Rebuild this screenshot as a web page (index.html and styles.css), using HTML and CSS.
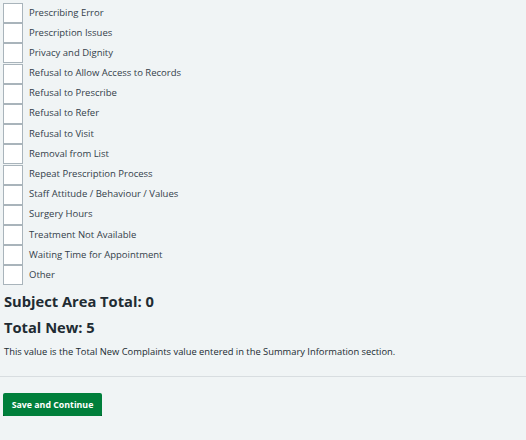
FILE: index.html
```html
<!DOCTYPE html>
<html lang="en">
<head>
<meta charset="utf-8">
<title>Subject Area</title>
<link rel="stylesheet" href="styles.css">
</head>
<body>
<main class="page">
  <div class="checkboxes">
    <label class="row"><span class="box"></span><span class="label">Prescribing Error</span></label>
    <label class="row"><span class="box"></span><span class="label">Prescription Issues</span></label>
    <label class="row"><span class="box"></span><span class="label">Privacy and Dignity</span></label>
    <label class="row"><span class="box"></span><span class="label">Refusal to Allow Access to Records</span></label>
    <label class="row"><span class="box"></span><span class="label">Refusal to Prescribe</span></label>
    <label class="row"><span class="box"></span><span class="label">Refusal to Refer</span></label>
    <label class="row"><span class="box"></span><span class="label">Refusal to Visit</span></label>
    <label class="row"><span class="box"></span><span class="label">Removal from List</span></label>
    <label class="row"><span class="box"></span><span class="label">Repeat Prescription Process</span></label>
    <label class="row"><span class="box"></span><span class="label">Staff Attitude / Behaviour / Values</span></label>
    <label class="row"><span class="box"></span><span class="label">Surgery Hours</span></label>
    <label class="row"><span class="box"></span><span class="label">Treatment Not Available</span></label>
    <label class="row"><span class="box"></span><span class="label">Waiting Time for Appointment</span></label>
    <label class="row"><span class="box"></span><span class="label">Other</span></label>
  </div>
  <h2 class="total">Subject Area Total: 0</h2>
  <h2 class="total total-new">Total New: 5</h2>
  <p class="hint">This value is the Total New Complaints value entered in the Summary Information section.</p>
  <hr class="rule">
  <button class="button" type="button">Save and Continue</button>
</main>
</body>
</html>
```

FILE: styles.css
```css
html, body {
  margin: 0;
  padding: 0;
  background: #f0f4f5;
}
body {
  font-family: "Open Sans", "Noto Sans", sans-serif;
  color: #212b32;
}
.page {
  padding: 3px 0 0 3px;
}
.checkboxes {
  display: flex;
  flex-direction: column;
  gap: 0.2px;
}
.row {
  display: flex;
  align-items: center;
  height: 20px;
}
.box {
  box-sizing: border-box;
  width: 20px;
  height: 20px;
  border: 1px solid #a9b4bb;
  background: #ffffff;
  flex: none;
}
.label {
  margin-left: 6px;
  font-size: 9.5px;
  color: #33404a;
  position: relative;
  top: -1px;
}
.total {
  margin: 6px 0 0 1px;
  font-size: 14.7px;
  font-weight: 700;
  line-height: 20px;
  color: #212b32;
}
.total-new {
  margin-top: 6px;
}
.hint {
  margin: 9px 0 0 1px;
  font-size: 9.35px;
  line-height: 12px;
  color: #212b32;
}
.rule {
  margin: 18px 0 0 -3px;
  border: 0;
  border-top: 1px solid #d8dde0;
}
.button {
  display: block;
  margin-top: 16px;
  font-family: "Open Sans", "Noto Sans", sans-serif;
  font-size: 8.8px;
  font-weight: 700;
  color: #ffffff;
  background: #007f3b;
  border: 0;
  border-radius: 2px;
  box-shadow: 0 2px 0 #00401e;
  width: 99px;
  height: 23px;
  padding: 0;
}
```
